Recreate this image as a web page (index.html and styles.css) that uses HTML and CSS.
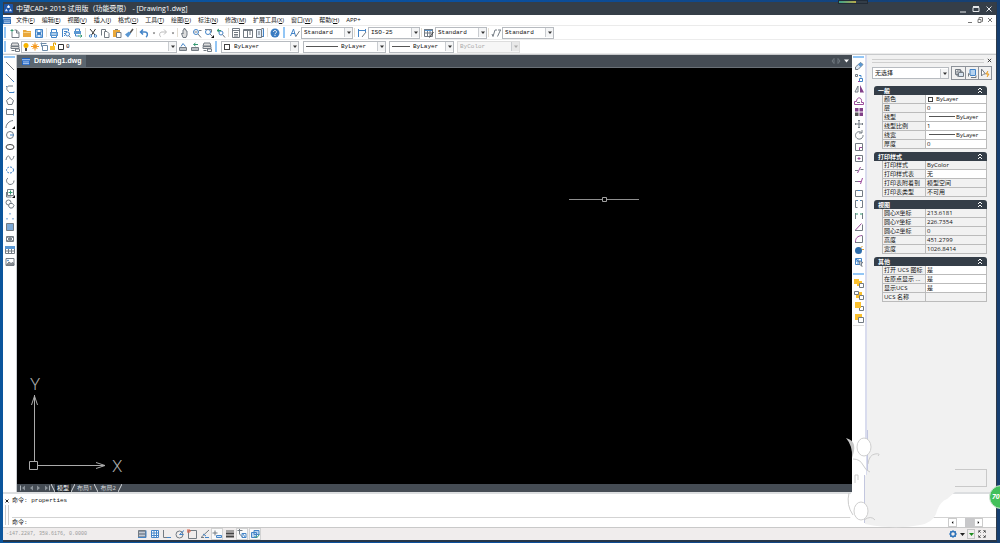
FILE: index.html
```
<!DOCTYPE html>
<html lang="zh-CN">
<head>
  <meta charset="UTF-8" />
  <title>中望CAD+ 2015 试用版</title>
  <meta name="viewport" content="width=device-width, initial-scale=1.0" />
  <link rel="stylesheet" href="styles.css">
</head>
<body>
<div class="window">

  <!-- title bar -->
  <header class="titlebar">
    <svg class="logo" viewBox="0 0 10 10"><rect width="10" height="10" rx="1" fill="#1d55a8"/><path d="M5 1l2 2.500l-2 1l-2-1z" fill="#fff"/><path d="M1 8l1.500-3l2 3zM5.500 8l1.500-3l2 3z" fill="#cfe2ff"/></svg>
    <h1>中望CAD+ 2015 试用版（功能受限） - [Drawing1.dwg]</h1>
    <button class="win-btn" aria-label="最小化"><svg viewBox="0 0 10 10"><path d="M2 8h6"/></svg></button>
    <button class="win-btn" aria-label="最大化"><svg viewBox="0 0 10 10"><path d="M2 3.500h6v4h-6zM2 2.500h6"/></svg></button>
    <button class="win-btn" aria-label="关闭"><svg viewBox="0 0 10 10"><path d="M2.500 2.500l5 5M7.500 2.500l-5 5"/></svg></button>
  </header>

  <nav class="menubar">
    <svg class="doc-icon" viewBox="0 0 9 8"><rect width="9" height="8" fill="#2467b5"/><path d="M0 2h9M1 4.500h7M1 6.500h7" stroke="#cfe0f5"/></svg>
    <button>文件(<u>F</u>)</button>
    <button>编辑(<u>E</u>)</button>
    <button>视图(<u>V</u>)</button>
    <button>插入(<u>I</u>)</button>
    <button>格式(<u>O</u>)</button>
    <button>工具(<u>T</u>)</button>
    <button>绘图(<u>D</u>)</button>
    <button>标注(<u>N</u>)</button>
    <button>修改(<u>M</u>)</button>
    <button>扩展工具(<u>X</u>)</button>
    <button>窗口(<u>W</u>)</button>
    <button>帮助(<u>H</u>)</button>
    <button>APP+</button>
    <span class="mdi">
      <button aria-label="最小化文档"><svg viewBox="0 0 10 10"><path d="M3 7.500h4"/></svg></button>
      <button aria-label="还原文档"><svg viewBox="0 0 10 10"><path d="M3 4.500h3v3h-3zM4 4v-1.500h3.500v4h-1"/></svg></button>
      <button aria-label="关闭文档"><svg viewBox="0 0 10 10"><path d="M3 3l4 4M7 3l-4 4"/></svg></button>
    </span>
  </nav>

  <!-- standard toolbar -->
  <div class="toolbar">
    <i class="handle"></i>
    <button class="tool" aria-label="新建"><svg viewBox="0 0 10 10"><path d="M2 4v5.500h7v-5l-2.500-2.500h-2M6.500 2v3h2.500"/><path class="green" d="M.500 2.500h3M2 1v3"/></svg></button>
    <button class="tool" aria-label="打开"><svg viewBox="0 0 10 10"><path class="fill-gold" d="M1 2h3l1 1h4v6h-8z"/><path d="M1.500 4.500h7" stroke="#f7d48a"/></svg></button>
    <button class="tool" aria-label="保存"><svg viewBox="0 0 10 10"><path class="blue" fill="#dbe9f7" d="M1.500 1.500h7v8h-7zM3 1.500v3h4v-3M3 9.500v-3h4v3M3 5.500h4"/></svg></button>
    <i class="sep"></i>
    <button class="tool" aria-label="打印"><svg viewBox="0 0 10 10"><path class="blue" d="M2.500 4v-2.500h5v2.500M2.500 7v2.500h5v-2.500"/><path class="fill-blue" d="M1 4h8v4h-8z"/><path d="M2.500 6h5" stroke="#fff"/></svg></button>
    <button class="tool" aria-label="打印预览"><svg viewBox="0 0 10 10"><path class="blue" d="M1.500 9v-8h6v2M3 3.500h3M3 5.500h1M3 7.500h1"/><circle class="blue" cx="6.500" cy="6" r="2"/><path d="M8 8l1.500 1.500"/></svg></button>
    <button class="tool" aria-label="发布"><svg viewBox="0 0 10 10"><path class="fill-blue" d="M1 3h7v3h-7z"/><path class="blue" d="M2.500 3v-2h4v2M2.500 6v2h3"/><path class="green" d="M5 8h4M7.500 6.500l1.500 1.500l-1.500 1.500"/></svg></button>
    <i class="sep"></i>
    <button class="tool" aria-label="剪切"><svg viewBox="0 0 10 10"><path stroke="#333" d="M2 1l5 6M7.500 1l-4 6"/><circle class="blue" cx="2.500" cy="8" r="1.200"/><circle class="blue" cx="7.500" cy="8" r="1.200"/></svg></button>
    <button class="tool" aria-label="复制"><svg viewBox="0 0 10 10"><path d="M1.500 7.500v-6h4v2M4.500 3.500h2.500l2 2v4h-4.500z"/></svg></button>
    <button class="tool" aria-label="粘贴"><svg viewBox="0 0 10 10"><path class="fill-gold" d="M1 2h7v7h-7z"/><path d="M3 1.500h3"/><path fill="#fff" d="M4.500 4.500h4.500v5h-4.500z"/></svg></button>
    <button class="tool" aria-label="特性匹配"><svg viewBox="0 0 10 10"><path stroke="#555" stroke-width="1.500" d="M9 1l-3 4"/><path class="fill-blue" d="M5 3.500l2 2l-3 4l-3-3z"/></svg></button>
    <i class="sep"></i>
    <button class="tool" aria-label="放弃"><svg viewBox="0 0 10 10"><path class="blue" stroke-width="1.500" d="M4 1.500l-2.500 2.500l2.500 2.500M2 4h4c3 0 3 4 1 5"/></svg></button>
    <button class="drop" aria-label="放弃列表"><svg viewBox="0 0 5 5"><path d="M1 2h3l-1.500 2z"/></svg></button>
    <button class="tool" aria-label="重做"><svg viewBox="0 0 10 10"><path stroke="#bbb" d="M6 1.500l2.500 2.500l-2.500 2.500M8 4h-4c-3 0-3 4-1 5"/></svg></button>
    <button class="drop" aria-label="重做列表"><svg viewBox="0 0 5 5"><path d="M1 2h3l-1.500 2z"/></svg></button>
    <i class="sep"></i>
    <button class="tool" aria-label="平移"><svg viewBox="0 0 10 10"><path fill="#ddd" d="M3 9.500l-1.500-4l1-.5l.5 1v-4l1-.5v-1h1v1l1 .2v1l1 .3v4l-1 2.500z"/></svg></button>
    <button class="tool" aria-label="实时缩放"><svg viewBox="0 0 10 10"><circle class="blue" cx="4" cy="4" r="2.500"/><path d="M2.500 4h3M6 6l3 3.500M7 2.500h2.500"/></svg></button>
    <button class="tool" aria-label="窗口缩放"><svg viewBox="0 0 10 10"><circle class="blue" cx="4" cy="4" r="2.500"/><path d="M1 1.500h6.500v3M6 6l2 2"/><path fill="#111" stroke="none" d="M10 7v3h-3z"/></svg></button>
    <button class="tool" aria-label="缩放上一个"><svg viewBox="0 0 10 10"><circle class="blue" cx="5" cy="5" r="2"/><path d="M6.500 6.500l2.500 3"/><path class="green" d="M3 1l-2 1.500l2 1.500M1 2.500h4"/></svg></button>
    <i class="sep"></i>
    <button class="tool" aria-label="特性"><svg viewBox="0 0 10 10"><path d="M1.500 .500h7v9h-7zM1.500 2.500h7M3 4.500h4M3 6.500h4M3 8h4"/></svg></button>
    <button class="tool" aria-label="设计中心"><svg viewBox="0 0 10 10"><path d="M.500 1.500h9v8h-9zM4.500 1.500v8M6 4h2M6 6h2M.500 2.500h9"/></svg></button>
    <button class="tool" aria-label="工具选项板"><svg viewBox="0 0 10 10"><path fill="#e3edf8" d="M1.500 1.500h5v8h-5zM6.500 .500h2v8h-2M3 4h2M3 6h2"/><path class="blue" d="M8.500 1v8"/></svg></button>
    <i class="sep"></i>
    <button class="tool" aria-label="帮助"><svg viewBox="0 0 10 10"><circle cx="5" cy="5" r="4.500" fill="#3a7cc2" stroke="none"/><path stroke="#fff" d="M3.500 4c0-2 3-2 3 0c0 1-1.500 1-1.500 2.300M5 7v1"/></svg></button>
    <i class="handle second"></i>
    <label class="tool" for="textStyle" title="文字样式"><svg viewBox="0 0 10 10"><path class="blue" d="M.500 8l3-7l2 7M1.500 5.500h3.500"/><path d="M9.500 3l-4 6"/></svg></label>
    <span class="combo w52"><select id="textStyle"><option>Standard</option></select><svg viewBox="0 0 7 9"><path d="M2 3.500h4l-2 2.500z"/></svg></span>
    <i class="sep"></i>
    <label class="tool" for="dimStyle" title="标注样式"><svg viewBox="0 0 10 10"><path class="blue" d="M1.500 1v8M8.500 1v3M1.500 2.500h7"/><path d="M9 4l-4 5"/></svg></label>
    <span class="combo w52"><select id="dimStyle"><option>ISO-25</option></select><svg viewBox="0 0 7 9"><path d="M2 3.500h4l-2 2.500z"/></svg></span>
    <i class="sep"></i>
    <label class="tool" for="tableStyle" title="表格样式"><svg viewBox="0 0 10 10"><path class="fill-blue" d="M0 1h9v2h-9z"/><path d="M.500 1.500h8v7h-8zM.500 5h8M3.500 3v6M6 3v6"/><path stroke="#444" d="M9.500 4l-4 5.500"/></svg></label>
    <span class="combo w52"><select id="tableStyle"><option>Standard</option></select><svg viewBox="0 0 7 9"><path d="M2 3.500h4l-2 2.500z"/></svg></span>
    <i class="sep"></i>
    <label class="tool" for="leaderStyle" title="引线样式"><svg viewBox="0 0 10 10"><path d="M1 6l1 2.500l2-6.500h2M9.500 2l-3 6.500M7 2h3"/></svg></label>
    <span class="combo w52"><select id="leaderStyle"><option>Standard</option></select><svg viewBox="0 0 7 9"><path d="M2 3.500h4l-2 2.500z"/></svg></span>
  </div>

  <!-- layer and properties toolbar -->
  <div class="toolbar">
    <i class="handle"></i>
    <label class="tool" for="layer" title="图层"><svg viewBox="0 0 10 10"><path fill="#ddd" d="M2 1h6l1 3h-8zM1 4.500h8v2h-8z"/><path d="M1.500 8.500h3M5.500 7h4v2.500h-4z"/></svg></label>
    <span class="combo layer">
      <svg class="layer-icons" viewBox="0 0 42 9"><circle cx="4" cy="3.500" r="2.500" fill="#f7b500"/><path d="M3 6h2v3h-2z" fill="#555"/><path d="M13 .500v8M9 4.500h8M10.500 2l5 5M15.500 2l-5 5" stroke="#f59b23"/><circle cx="13" cy="4.500" r="2" fill="#f59b23"/><path d="M20.500 3.500h5v5h-5zM18.500 1.500h6M19.500 .500v4" fill="none" stroke="#6d8ba8"/><path d="M28 4h5v4h-5z" fill="#fbc02d"/><path d="M31.500 4v-3h2v2" fill="none" stroke="#e0a100"/><path d="M36.500 2.500h5v5h-5z" fill="#fff" stroke="#333"/></svg>
      <select id="layer"><option>0</option></select><svg viewBox="0 0 7 9"><path d="M2 3.500h4l-2 2.500z"/></svg>
    </span>
    <button class="tool" aria-label="置为当前图层"><svg viewBox="0 0 10 10"><path class="blue" d="M3 4.500l2-3l2.500 3"/><path d="M1.500 5.500h7v3h-7zM1.500 7h7"/></svg></button>
    <button class="tool" aria-label="上一个图层"><svg viewBox="0 0 10 10"><path class="green" d="M5.500 1l-2 1.500l2 1.500M4 2.500h4"/><path d="M1.500 5.500h7v3h-7zM1.500 7h7"/></svg></button>
    <button class="tool" aria-label="图层状态"><svg viewBox="0 0 10 10"><path fill="#ddd" d="M2 1h6l1 3h-8zM1 4.500h8v2h-8z"/><path d="M1.500 8.500h3M5.500 7h4v2.500h-4z"/></svg></button>
    <i class="handle second"></i>
    <span class="combo color"><i class="swatch"></i><select aria-label="颜色"><option>ByLayer</option></select><svg viewBox="0 0 7 9"><path d="M2 3.500h4l-2 2.500z"/></svg></span>
    <span class="combo linetype"><i class="line"></i><select aria-label="线型"><option>ByLayer</option></select><svg viewBox="0 0 7 9"><path d="M2 3.500h4l-2 2.500z"/></svg></span>
    <span class="combo lineweight"><i class="line short"></i><select aria-label="线宽"><option>ByLayer</option></select><svg viewBox="0 0 7 9"><path d="M2 3.500h4l-2 2.500z"/></svg></span>
    <span class="combo plot off"><select aria-label="打印样式" disabled><option>ByColor</option></select><svg viewBox="0 0 7 9"><path d="M2 3.500h4l-2 2.500z"/></svg></span>
  </div>

  <main class="work">
    <!-- draw tools -->
    <aside class="side left">
      <i class="grip"></i>
      <div class="stack">
        <button aria-label="直线"><svg viewBox="0 0 10 10"><path d="M1 1l8 8"/></svg></button>
        <button aria-label="构造线"><svg viewBox="0 0 10 10"><path class="blue" d="M1 1l8 8"/><path d="M3 3l4 4"/></svg></button>
        <button aria-label="多段线"><svg viewBox="0 0 10 10"><path d="M8 2h-4c-3 0-3 5 0 5.500"/><path class="blue" d="M1 2.500h1M4 8.500h5v-1"/></svg></button>
        <button aria-label="正多边形"><svg viewBox="0 0 10 10"><path d="M5 1.500l3.500 3l-1.500 4h-4l-1.500-4z"/></svg></button>
        <button aria-label="矩形"><svg viewBox="0 0 10 10"><path d="M1.500 2.500h7v5h-7z"/><path class="blue" d="M1 2h1M8 8h1"/></svg></button>
        <button aria-label="圆弧"><svg viewBox="0 0 10 10"><path d="M1 9c0-4 3-7 7-7.500"/><path fill="#111" stroke="none" d="M10 7v3h-3z"/></svg></button>
        <button aria-label="圆"><svg viewBox="0 0 10 10"><circle cx="5" cy="5" r="3.500"/><path class="blue" d="M5 5h4"/></svg></button>
        <button aria-label="椭圆"><svg viewBox="0 0 10 10"><ellipse cx="5" cy="5" rx="4" ry="2.500" stroke="#444"/></svg></button>
        <button aria-label="样条曲线"><svg viewBox="0 0 10 10"><path d="M1 7c1-5 3-5 4-2s3 2 4-2"/></svg></button>
        <button aria-label="修订云线"><svg viewBox="0 0 10 10"><ellipse class="blue" cx="5" cy="5" rx="3.500" ry="3" stroke-dasharray="2 1"/></svg></button>
        <button aria-label="椭圆弧"><svg viewBox="0 0 10 10"><path d="M3 2c-3 2-1 6 2 6.500c2 0 4-1 4-4"/></svg></button>
        <button aria-label="插入块"><svg viewBox="0 0 10 10"><path d="M2.500 1.500h6v6h-6zM1.500 4v5h5"/><path class="green" d="M5.500 2.500v4M3.500 4.500h4"/><path fill="#111" stroke="none" d="M10 7v3h-3z"/></svg></button>
        <button aria-label="创建块"><svg viewBox="0 0 10 10"><circle cx="3.500" cy="3.500" r="2.500"/><path fill="#fff" d="M4.500 4.500h3l1.500 2l-1.500 2.500h-2.500l-1.500-2z"/></svg></button>
        <button aria-label="点"><svg viewBox="0 0 10 10"><path class="blue" d="M5 2v1.500M2 7v1.500M8 7v1.500"/></svg></button>
        <button aria-label="填充"><svg viewBox="0 0 10 10"><path fill="#7da9d6" d="M1.500 1.500h7v7h-7z"/></svg></button>
        <button aria-label="面域"><svg viewBox="0 0 10 10"><path d="M1.500 2.500h7v5h-7zM2 3l6 4M8 3l-6 4"/><circle cx="5" cy="5" r="1.500"/></svg></button>
        <button aria-label="表格"><svg viewBox="0 0 10 10"><path fill="#fff" d="M.500 2.500h9v6h-9zM1 6h8M3.500 2v6M6.500 2v6"/><path class="fill-blue" d="M0 1h10v3h-10z"/></svg></button>
        <button aria-label="图像"><svg viewBox="0 0 10 10"><path d="M1 1.500h8v7h-8z"/><path fill="#999" d="M1.500 8l2.500-3l2 1.500l2-1l1 2.500z"/><circle class="blue" cx="3" cy="3.500" r=".5"/></svg></button>
      </div>
    </aside>

    <section class="drawing">
      <div class="doc-tabs">
        <button class="doc-tab"><svg viewBox="0 0 9 8"><rect width="9" height="8" fill="#1c62c4"/><path d="M0 2h9M1 4.500h7M1 6.500h7" stroke="#d3e5fb"/></svg>Drawing1.dwg</button>
        <svg class="tab-nav" viewBox="0 0 20 8"><path d="M4 1.500l-2 2.500l2 2.500zM8 1.500l2 2.500l-2 2.500z" fill="none" stroke="#717980"/><path d="M14 2.500h5l-2.500 3z" fill="#fff"/></svg>
      </div>
      <div class="canvas">
        <svg class="cursor" viewBox="0 0 70 6"><path d="M0 3.500h33M37 3.500h33" stroke="#8f8f8f"/><path d="M33.500 1.500h4v4h-4z" fill="none" stroke="#a0a0a0"/></svg>
        <svg class="ucs" viewBox="0 -10 110 110"><path d="M4.500 83.500h8v8h-8zM9.500 83v-66M6.500 27l3-9l3 9M13 87.500h67M71 84.500l9 3l-9 3" fill="none" stroke="#aaa"/><text x="5" y="12">Y</text><text x="87" y="94">X</text></svg>
      </div>
      <div class="layout-tabs">
        <svg viewBox="0 0 32 8"><path d="M1.500 1.500v5M30.500 1.500v5" stroke="#aeb4ba"/><path d="M6 1.500v5l-3-2.500zM14 1.500v5l-3-2.500zM18 1.500v5l3-2.500zM26 1.500v5l3-2.500z" fill="#8d949b"/></svg>
        <svg class="slash" viewBox="0 0 4 8"><path d="M0 0l4 8"/></svg><button class="on">模型</button><svg class="slash" viewBox="0 0 4 8"><path d="M4 0l-4 8"/></svg><button>布局1</button><svg class="slash" viewBox="0 0 4 8"><path d="M0 0l4 8"/></svg><button>布局2</button><svg class="slash" viewBox="0 0 4 8"><path d="M4 0l-4 8"/></svg>
      </div>
    </section>

    <!-- modify tools -->
    <aside class="side right">
      <i class="grip"></i>
      <div class="stack">
        <button aria-label="删除"><svg viewBox="0 0 10 10"><path fill="#dce8f5" d="M1.500 6l5-4.500l2.500 2l-5 5h-2.500z"/><path class="fill-blue" d="M4 3.500l2.500-2l2.500 2l-2.500 2.500z"/></svg></button>
        <button aria-label="复制对象"><svg viewBox="0 0 10 10"><path d="M1.500 1.500h2v2h-2z"/><path class="blue" d="M5 2.500h2v2M5.500 5.500h3v3h-3z"/><path class="purple" d="M4 8.500h2"/></svg></button>
        <button aria-label="镜像"><svg viewBox="0 0 10 10"><path d="M4 2v6h-3z"/><path class="fill-purple" d="M6 1v7.500h4z"/></svg></button>
        <button aria-label="偏移"><svg viewBox="0 0 10 10"><path class="purple" d="M.500 8.500h9v-2h-2c1-6-5-6-5-1h-2z"/><path d="M3 6.500h3"/></svg></button>
        <button aria-label="阵列"><svg viewBox="0 0 10 10"><path class="fill-purple" d="M1 1h3.500v3.500h-3.500zM5.500 1h3.500v3.500h-3.500zM5.500 5.500h3.500v3.500h-3.500z"/><path fill="#555" stroke="none" d="M1 5.500h3.500v3.500h-3.500z"/></svg></button>
        <button aria-label="移动"><svg viewBox="0 0 10 10"><path d="M5 1v8M1 5h8M4 2l1-1l1 1M4 8l1 1l1-1M2 4l-1 1l1 1M8 4l1 1l-1 1"/></svg></button>
        <button aria-label="旋转"><svg viewBox="0 0 10 10"><path d="M7.500 2.500c-3-2-6 0-6 3s4 5 6.500 2.500c1-1 1-2 1-3M8 0v3h-3"/></svg></button>
        <button aria-label="缩放"><svg viewBox="0 0 10 10"><path d="M1.500 1.500h7v7h-7z"/><path class="purple" d="M5.500 8v-2.500h2.500"/></svg></button>
        <button aria-label="拉伸"><svg viewBox="0 0 10 10"><path d="M1.500 2.500h7v6h-7z"/><path class="purple" d="M5 7v-3M3.500 5.500h3"/></svg></button>
        <button aria-label="修剪"><svg viewBox="0 0 10 10"><path d="M1 5.500h3M6.500 4.500h3"/><path class="purple" d="M6.500 2l-3 6"/></svg></button>
        <button aria-label="延伸"><svg viewBox="0 0 10 10"><path d="M1 5.500h3"/><path class="purple" d="M4 5.500h3M8.500 2l-2 6"/></svg></button>
        <button aria-label="打断于点"><svg viewBox="0 0 10 10"><path d="M1.500 2.500h7v6h-7z"/><path class="blue" d="M4 2.500h2"/></svg></button>
        <button aria-label="打断"><svg viewBox="0 0 10 10"><path d="M3.500 1.500h-2v7h2M6.500 8.500h2v-7h-2"/><path class="blue" d="M3 1.500h1M6 1.500h1"/></svg></button>
        <button aria-label="合并"><svg viewBox="0 0 10 10"><path d="M1.500 8v-6M8.500 8v-6"/><path class="green" d="M1.500 3h2.500M8.500 3h-2.500"/></svg></button>
        <button aria-label="倒角"><svg viewBox="0 0 10 10"><path d="M1 8.500h7.500v-6"/><path class="purple" d="M1.500 8l6-6.500"/></svg></button>
        <button aria-label="圆角"><svg viewBox="0 0 10 10"><path d="M1 8.500h7.500v-7"/><path class="purple" d="M1.500 8c0-4 2-6 6.500-6.500"/></svg></button>
        <button aria-label="分解"><svg viewBox="0 0 10 10"><circle cx="4.500" cy="5.500" r="3.500" fill="#2c6cab" stroke="none"/><path stroke="#e0a032" d="M6.500 2.500l2-1M8 4.500h2"/></svg></button>
        <button aria-label="快速选择"><svg viewBox="0 0 10 10"><path class="blue" d="M1.500 1.500h6v6h-6zM1.500 4h6M4 1.500v6M2 2l5 5"/><path fill="#fff" d="M5 4.500l4 1l-2 1l1 3l-2-2z"/></svg></button>
      </div>
      <i class="grip"></i>
      <div class="stack order">
        <button aria-label="前置"><svg viewBox="0 0 10 10"><path class="fill-yellow" d="M0 1h5v5h-5zM3 3h5v5h-5z"/><path fill="#fff" d="M5.500 5.500h4v4h-4z"/></svg></button>
        <button aria-label="后置"><svg viewBox="0 0 10 10"><path class="fill-yellow" d="M2 2h6v6h-6z"/><path fill="#fff" d="M.500 1.500h4v3h-4zM5.500 5.500h4v4h-4z"/></svg></button>
        <button aria-label="置于对象之上"><svg viewBox="0 0 10 10"><path fill="#fff" d="M5.500 5.500h4v4h-4z"/><path class="fill-yellow" d="M1 1h6v6h-6z"/></svg></button>
        <button aria-label="置于对象之下"><svg viewBox="0 0 10 10"><path class="fill-yellow" d="M1 1h7v6h-7z"/><path fill="#fff" d="M4.500 4.500h5v5h-5z"/></svg></button>
      </div>
      <i class="end"></i>
    </aside>

    <!-- properties palette -->
    <aside class="palette">
      <div class="palette-top"><i></i><button aria-label="关闭特性"><svg viewBox="0 0 6 6"><path d="M1 1l4 4M5 1l-4 4" stroke="#222"/></svg></button></div>
      <div class="pick">
        <span class="combo"><select aria-label="选择对象"><option>无选择</option></select><svg viewBox="0 0 7 9"><path d="M2 3.500h4l-2 2.500z"/></svg></span>
        <div class="pick-btns">
          <button aria-label="切换添加选择"><svg viewBox="0 0 10 10"><path d="M1.500 1.500h5v5h-5zM3 3h5v5h-5z"/><path fill="#d7e3ef" d="M4.500 4.500h5v4h-5z"/></svg></button>
          <button aria-label="选择"><svg viewBox="0 0 10 10"><path class="blue" fill="#b5d3f0" d="M3 1.500h5.500v6h-5.500z"/><path fill="#fff" d="M1.500 8.500v-3l2 1.500M4 9.500h5v-2"/></svg></button>
          <button aria-label="快速选择"><svg viewBox="0 0 10 10"><path fill="#fff" d="M1.500 1l4 5h-2l-2 2z"/><path fill="#f7b53b" stroke="#eaa02c" d="M8 3l-2 3h3l-2 3"/></svg></button>
        </div>
      </div>

      <section class="group">
        <h2>一般<svg viewBox="0 0 6 7"><path d="M1 3l2-2l2 2M1 6l2-2l2 2"/></svg></h2>
        <table>
          <tr><th>颜色</th><td class="in"><i class="swatch"></i>ByLayer</td></tr>
          <tr><th>层</th><td class="in">0</td></tr>
          <tr><th>线型</th><td class="in"><i class="line"></i>ByLayer</td></tr>
          <tr><th>线型比例</th><td class="in">1</td></tr>
          <tr><th>线宽</th><td class="in"><i class="line"></i>ByLayer</td></tr>
          <tr><th>厚度</th><td class="in">0</td></tr>
        </table>
      </section>
      <section class="group">
        <h2>打印样式<svg viewBox="0 0 6 7"><path d="M1 3l2-2l2 2M1 6l2-2l2 2"/></svg></h2>
        <table>
          <tr><th>打印样式</th><td>ByColor</td></tr>
          <tr><th>打印样式表</th><td class="in">无</td></tr>
          <tr><th>打印表附着到</th><td>模型空间</td></tr>
          <tr><th>打印表类型</th><td>不可用</td></tr>
        </table>
      </section>
      <section class="group">
        <h2>视图<svg viewBox="0 0 6 7"><path d="M1 3l2-2l2 2M1 6l2-2l2 2"/></svg></h2>
        <table>
          <tr><th>圆心X坐标</th><td>213.6181</td></tr>
          <tr><th>圆心Y坐标</th><td>226.7354</td></tr>
          <tr><th>圆心Z坐标</th><td>0</td></tr>
          <tr><th>高度</th><td>451.2799</td></tr>
          <tr><th>宽度</th><td>1026.8414</td></tr>
        </table>
      </section>
      <section class="group">
        <h2>其他<svg viewBox="0 0 6 7"><path d="M1 3l2-2l2 2M1 6l2-2l2 2"/></svg></h2>
        <table>
          <tr><th>打开 UCS 图标</th><td class="in">是</td></tr>
          <tr><th>在原点显示 ...</th><td class="in">是</td></tr>
          <tr><th>显示UCS</th><td class="in">是</td></tr>
          <tr><th>UCS 名称</th><td></td></tr>
        </table>
      </section>
      <div class="hint"></div>
    </aside>
  </main>

  <!-- command line -->
  <section class="command">
    <div class="command-grip"><button aria-label="关闭命令行"><svg viewBox="0 0 4 4"><path d="M.500 .500l3 3M3.500 .500l-3 3" stroke="#222"/></svg></button><i></i></div>
    <div class="command-body">
      <p>命令: properties</p>
      <div class="prompt"><label for="cmd">命令:</label><input id="cmd" type="text"></div>
      <div class="hscroll"><button aria-label="向左"><svg viewBox="0 0 9 8"><path d="M5.500 2v4l-2-2z"/></svg></button><i></i><button aria-label="向右"><svg viewBox="0 0 9 8"><path d="M3.500 2v4l2-2z"/></svg></button></div>
    </div>
  </section>

  <footer class="status">
    <span class="coords">-147.2287, 358.6176, 0.0000</span>
    <div class="modes">
      <button aria-label="捕捉"><svg viewBox="0 0 10 10"><path fill="#8b95a3" d="M1.500 1.500h7v7h-7z"/><path stroke="#c3cad3" d="M2 3.500h6M2 6.500h6"/><path class="blue" d="M1 8.500h8v-7"/></svg></button>
      <button aria-label="栅格"><svg viewBox="0 0 10 10"><path class="blue" fill="#fff" d="M1.500 1.500h7v7h-7zM4 1v8M6.500 1v8M1 4h8M1 6.500h8"/></svg></button>
      <button aria-label="正交"><svg viewBox="0 0 10 10"><path d="M1.500 1v7.500h4"/><path class="blue" d="M5 8.500h4"/></svg></button>
      <button aria-label="极轴"><svg viewBox="0 0 10 10"><circle cx="4.500" cy="5.500" r="3.500"/><path class="blue" d="M4.500 5.500l4.500-4M4.500 5.500h4"/></svg></button>
      <button aria-label="对象捕捉"><svg viewBox="0 0 10 10"><path d="M1.500 1.500h8v8h-8z"/><path stroke="#e0654a" d="M0 1h3v2h-3z"/></svg></button>
      <button aria-label="对象追踪"><svg viewBox="0 0 10 10"><path d="M9 1l-8 7.500h3"/><path class="blue" d="M5 8.500h4M3 5l3 2"/></svg></button>
      <button class="pressed" aria-label="动态输入"><svg viewBox="0 0 10 10"><path d="M3 1.500v5M.500 4h5"/><path class="blue" fill="#cfe2f5" d="M4.500 6.500h5v2h-5z"/></svg></button>
      <button aria-label="线宽显示"><svg viewBox="0 0 10 10"><path d="M1 2h8" stroke="#555"/><path d="M1 4.500h8M1 7.500h8" stroke="#444" stroke-width="2"/></svg></button>
      <button class="pressed" aria-label="循环选择"><svg viewBox="0 0 10 10"><path d="M.500 1.500h5M2.500 0v5l3 3"/><path class="blue" d="M5 4.500h4v4h-4zM5 4l4 5"/></svg></button>
      <button class="pressed" aria-label="注释"><svg viewBox="0 0 10 10"><path class="blue" fill="#bcd6ef" d="M1.500 3.500h5v5h-5zM4 1.500h5v4h-5z"/><path class="green" d="M4.500 7l2 2l3-3.500"/></svg></button>
    </div>
    <div class="status-end">
      <button aria-label="设置"><svg viewBox="0 0 10 10"><circle cx="5" cy="5" r="2.500" stroke="#2f73b8" stroke-width="1.500"/><path class="blue" d="M5 1v1M5 8v1M1 5h1M8 5h1M2 2l1 1M7 7l1 1M8 2l-1 1M3 7l-1 1"/></svg></button>
      <button class="drop" aria-label="设置列表"><svg viewBox="0 0 5 5"><path d="M0 1h5l-2.500 3z"/></svg></button>
      <button class="tray" aria-label="状态托盘"><svg viewBox="0 0 5 5"><path fill="#1b8a1b" d="M0 1h5l-2.500 3z"/></svg></button>
      <button aria-label="全屏"><svg viewBox="0 0 10 10"><path stroke="#888" d="M1.500 4v-2.500h2.500M6 1.500h2.500v2.500M8.500 6v2.500h-2.500M4 8.500h-2.500v-2.500"/><path stroke="#444" d="M2 2l1.500 1.500M8 2l-1.500 1.500M8 8l-1.500-1.500M2 8l1.500-1.500"/></svg></button>
    </div>
  </footer>
</div>

<!-- ornament over the lower right corner -->
<svg class="ornament" viewBox="0 0 160 113">
  <path d="M13 20v40q-8 12 -2 30l3 7h12v-75l-4-3z" fill="#fff"/>
  <path d="M39 24l-9 18l-5 4v48q30 6 55 1q12-2 16-11q3-12 11-15l8-7v-38z" fill="#f1f1f1"/>
  <path d="M27.500 0v41M24.500 45v48" stroke="#c3c7df" fill="none"/>
  <path d="M6 8q7 2 8 7t-2 13q1-12-6-20z" fill="#c6c6c6"/>
  <g fill="#fff" stroke="#cfcfcf"><ellipse cx="24" cy="17" rx="7" ry="9"/><ellipse cx="21" cy="81" rx="7" ry="9"/></g>
  <path d="M13 29q7 0 10 6t7 7M28 34q1-9 7-10t3 2M15 53v-8h3v5M9 63q-3 12 4 22M24 90q7-5 11 0" fill="none" stroke="#ccc"/>
</svg>
<div class="gadget"></div>
<div class="badge">70</div>
</body>
</html>
```

FILE: styles.css
```
* {
  box-sizing: border-box;
}

body {
  margin: 0;
  height: 100vh;
  padding: 2px 3px 1px;
  position: relative;
  overflow: hidden;
  background: linear-gradient(90deg, #0b559c, #0a4f9f 50%, #173f70);
  color: #111;
  font-family: "Open Sans", "Noto Sans CJK SC", sans-serif;
  font-size: 6px;
  line-height: 8px;
}

button, select, input {
  font: inherit;
  color: inherit;
  margin: 0;
  padding: 0;
  border: 0;
  background: none;
}

button {
  cursor: pointer;
  white-space: nowrap;
}

h1, h2, p {
  margin: 0;
  font-weight: normal;
}

svg {
  display: block;
  flex: none;
}

.window {
  height: 100%;
  display: flex;
  flex-direction: column;
  background: #fff;
  border-right: 1px solid #2f3b49;
  border-bottom: 2px solid #27374a;
}

/* title bar */
.titlebar {
  flex: none;
  height: 13px;
  display: flex;
  align-items: center;
  padding: 0 1px;
  background: #353e48;
  color: #fff;
}

.titlebar h1 {
  flex: 1;
  font-size: 7px;
  line-height: 12px;
}

.logo {
  width: 9px;
  height: 9px;
  margin-right: 3px;
}

.win-btn {
  width: 13px;
}

.win-btn svg {
  width: 10px;
  height: 10px;
  margin: 0 auto;
  fill: none;
  stroke: #e4e6e8;
}

/* menu */
.menubar {
  flex: none;
  height: 11px;
  display: flex;
  align-items: center;
  gap: 7px;
  padding-right: 1px;
  border-bottom: 1px solid #ebebeb;
}

.doc-icon {
  width: 8px;
  height: 7px;
  margin-right: -2px;
}

.mdi {
  display: flex;
  margin-left: auto;
}

.mdi svg {
  width: 10px;
  height: 10px;
  fill: none;
  stroke: #777;
}

/* toolbars */
.toolbar {
  flex: none;
  height: 14px;
  display: flex;
  align-items: center;
  padding-left: 1px;
  border-bottom: 1px solid #ececec;
  font-family: "Liberation Mono", monospace;
}

.handle {
  width: 2px;
  height: 11px;
  margin-right: 3px;
  background: #93c6f5;
}

.handle.second {
  margin: 0 4px 0 2px;
}

.sep {
  width: 1px;
  height: 9px;
  margin: 0 1px;
  background: #e2ddd2;
}

.tool {
  width: 12px;
  flex: none;
}

.tool svg, .side svg, .modes svg, .pick-btns svg, .status-end svg {
  width: 10px;
  height: 10px;
  margin: 0 auto;
  fill: none;
  stroke: #737b83;
}

.drop {
  width: 7px;
}

.drop svg {
  width: 4px;
  height: 4px;
  margin: 0 auto;
  fill: #555;
  stroke: none;
}

svg .blue {
  stroke: #4384c8;
}

svg .green {
  stroke: #359a72;
}

svg .purple {
  stroke: #9a4b9b;
}

svg .fill-blue {
  fill: #5a97d2;
  stroke: none;
}

svg .fill-gold {
  fill: #eaa83a;
  stroke: none;
}

svg .fill-yellow {
  fill: #fbc02d;
  stroke: none;
}

svg .fill-purple {
  fill: #82408a;
  stroke: none;
}

.combo {
  flex: none;
  height: 12px;
  display: flex;
  align-items: center;
  border: 1px solid #b7bbc0;
  background: #fff;
}

.combo select {
  flex: 1;
  min-width: 0;
  height: 10px;
  padding-left: 2px;
  appearance: none;
  outline: none;
}

.combo > svg:last-child {
  width: 8px;
  height: 9px;
  border-left: 1px solid #c9ccd0;
  background: #f4f5f6;
  fill: #333;
}

.combo .layer-icons {
  width: 42px;
  height: 9px;
}

.w52 {
  width: 52px;
}

.combo.layer {
  width: 156px;
}

.color {
  width: 78px;
  margin-right: 4px;
}

.linetype {
  width: 83px;
  margin-right: 3px;
}

.lineweight {
  width: 65px;
  margin-right: 3px;
}

.plot {
  width: 63px;
}

.off {
  background: #f6f6f6;
  border-color: #ddd;
  color: #aaa;
}

.off select {
  opacity: 1;
}

.off > svg:last-child {
  fill: #aaa;
  background: #e8e8e8;
}

.swatch {
  display: inline-block;
  width: 6px;
  height: 6px;
  margin: 0 2px;
  border: 1px solid #444;
  background: #fff;
}

.line {
  width: 32px;
  height: 1px;
  margin: 0 1px 0 2px;
  background: #555;
}

.line.short {
  width: 18px;
}

/* work area */
.work {
  flex: 1;
  min-height: 0;
  display: flex;
  border-top: 1px solid #c8cacc;
}

.side {
  flex: none;
  width: 14px;
  padding: 1px 1px 0;
  border-right: 1px solid #c9ccd0;
}

.side.right {
  width: 15px;
  border-right: 2px solid #d9dcee;
}

.grip {
  display: block;
  height: 2px;
  background: #93c6f5;
}

.stack {
  height: 206px;
  margin: 3px 0 6px;
  display: flex;
  flex-direction: column;
  justify-content: space-between;
}

.stack.order {
  height: 45px;
  margin: 3px 0 2px;
}

.end {
  display: block;
  height: 1px;
  background: #ddd;
}

.drawing {
  flex: 1;
  min-width: 0;
  display: flex;
  flex-direction: column;
}

.doc-tabs {
  flex: none;
  height: 13px;
  display: flex;
  align-items: center;
  justify-content: space-between;
  background: #454c54;
  border-bottom: 1px solid #6a7076;
}

.doc-tab {
  height: 12px;
  display: flex;
  align-items: center;
  gap: 4px;
  padding: 0 5px;
  background: #5b6670;
  color: #fff;
  font-family: "Liberation Sans", sans-serif;
  font-size: 7px;
  font-weight: bold;
}

.doc-tab svg {
  width: 8px;
  height: 7px;
}

.tab-nav {
  width: 20px;
  height: 8px;
  margin-right: 2px;
}

.canvas {
  flex: 1;
  position: relative;
  background: #000;
}

.cursor {
  position: absolute;
  left: 552px;
  top: 128px;
  width: 70px;
  height: 6px;
}

.ucs {
  position: absolute;
  left: 8px;
  bottom: 6px;
  width: 110px;
  height: 110px;
}

.ucs text {
  fill: #aaa;
  font-family: Roboto, sans-serif;
  font-size: 17px;
  font-weight: 300;
}

.layout-tabs {
  flex: none;
  height: 8px;
  display: flex;
  align-items: center;
  padding-left: 2px;
  background: #454c54;
  color: #d5d8db;
}

.layout-tabs svg {
  width: 32px;
  height: 8px;
}

.layout-tabs .slash {
  width: 4px;
  stroke: #d5d8db;
}

.layout-tabs button {
  padding: 0 2px;
  line-height: 8px;
}

.layout-tabs .on {
  background: #20262c;
  color: #fff;
}

/* properties palette */
.palette {
  flex: none;
  width: 129px;
  padding: 3px 4px 0 5px;
  display: flex;
  flex-direction: column;
  background: #f1f1f1;
}

.palette-top {
  display: flex;
  align-items: center;
  gap: 3px;
}

.palette-top i {
  flex: 1;
  height: 4px;
  border: 1px solid #cfcfcf;
  border-width: 1px 0;
}

.palette-top svg {
  width: 5px;
  height: 5px;
}

.pick {
  display: flex;
  align-items: center;
  margin: 3px 0 6px;
}

.pick .combo {
  flex: 1;
  margin-right: 2px;
}

.pick-btns {
  display: flex;
  border: 1px solid #8d9299;
}

.pick-btns button {
  width: 13px;
  height: 12px;
}

.pick-btns button + button {
  border-left: 1px solid #8d9299;
}

.group {
  margin: 0 5px 3px 2px;
}

.group h2 {
  height: 9px;
  display: flex;
  align-items: center;
  justify-content: space-between;
  padding: 0 4px;
  border-radius: 3px 3px 0 0;
  background: #353e48;
  color: #fff;
  font-size: 6px;
  font-weight: bold;
}

.group h2 svg {
  width: 6px;
  height: 7px;
  fill: none;
  stroke: #fff;
}

.group table {
  width: calc(100% - 8px);
  margin-left: 8px;
  table-layout: fixed;
  border-spacing: 0;
  border-left: 1px solid #bbb;
}

.group tr {
  height: 9px;
}

.group th, .group td {
  padding: 0 0 0 1px;
  border: 1px solid #bbb;
  border-width: 0 1px 1px 0;
  font-weight: normal;
  text-align: left;
  white-space: nowrap;
  line-height: 8px;
}

.group th {
  width: 43px;
}

.group .in {
  background: #fff;
}

.group .line {
  display: inline-block;
  width: 26px;
  vertical-align: 2px;
}

.group .swatch {
  width: 5px;
  height: 5px;
  margin: 0 3px 0 1px;
  vertical-align: -1px;
}

.hint {
  height: 18px;
  margin: auto 5px 5px 2px;
  border: 1px solid #c9c9c9;
}

/* command line */
.command {
  flex: none;
  height: 36px;
  display: flex;
  border-top: 2px solid #dcdee0;
  border-bottom: 1px solid #c9c9c9;
  font-family: "Liberation Mono", "Noto Sans CJK SC", monospace;
}

.command-grip {
  width: 9px;
  padding: 5px 2px 2px;
  display: flex;
  flex-direction: column;
  gap: 2px;
}

.command-grip svg {
  width: 4px;
  height: 4px;
}

.command-grip button {
  height: 4px;
}

.command-grip i {
  flex: 1;
  width: 4px;
  border: 1px solid #ccc;
  border-width: 0 1px;
}

.command-body {
  flex: 1;
  position: relative;
}

.command-body p {
  height: 24px;
  padding-top: 3px;
  border-bottom: 1px solid #d3d3d3;
}

.prompt {
  display: flex;
  padding-top: 1px;
}

.prompt input {
  flex: 1;
  height: 8px;
  margin-left: 2px;
  outline: none;
}

.hscroll {
  position: absolute;
  right: 13px;
  bottom: 0;
  width: 35px;
  height: 9px;
  display: flex;
  background: #fff;
}

.hscroll button {
  width: 9px;
  border: 1px solid #ccc;
}

.hscroll svg {
  width: 7px;
  height: 7px;
}

.hscroll i {
  flex: 1;
  margin-left: 8px;
  background: #c8c8ca;
}

/* status bar */
.status {
  flex: none;
  height: 12px;
  display: flex;
  align-items: center;
  padding: 0 9px 0 3px;
  background: #f0eded;
}

.coords {
  width: 131px;
  color: #999;
  font-family: "Liberation Mono", monospace;
  font-size: 5px;
}

.modes {
  width: 123px;
  display: flex;
  justify-content: space-between;
}

.modes .pressed {
  background: #fafafa;
  box-shadow: 0 0 0 1px #d2d2d2;
}

.status-end {
  margin-left: auto;
  display: flex;
  align-items: center;
  gap: 1px;
}

.status-end .drop svg, .tray svg {
  width: 5px;
  height: 5px;
  fill: #222;
  stroke: none;
}

.tray {
  width: 8px;
  height: 10px;
  margin-right: 1px;
  border: 1px solid #c5c5c5;
}

/* things floating over the window */
.ornament {
  position: absolute;
  right: 0;
  bottom: 0;
  width: 160px;
  height: 113px;
  pointer-events: none;
}

.gadget {
  position: absolute;
  top: 0;
  right: 132px;
  width: 30px;
  height: 4px;
  border: 1px solid #222b36;
  background: linear-gradient(90deg, #3aa08c, #b7a94a 60%, #333d48 60%);
}

.badge {
  position: absolute;
  right: -13px;
  bottom: 34px;
  width: 24px;
  height: 24px;
  padding-left: 2px;
  border: 1px solid #d5e6d7;
  border-radius: 50%;
  background: #43c05a;
  color: #fff;
  font-size: 7px;
  font-weight: bold;
  font-style: italic;
  line-height: 22px;
}
```
